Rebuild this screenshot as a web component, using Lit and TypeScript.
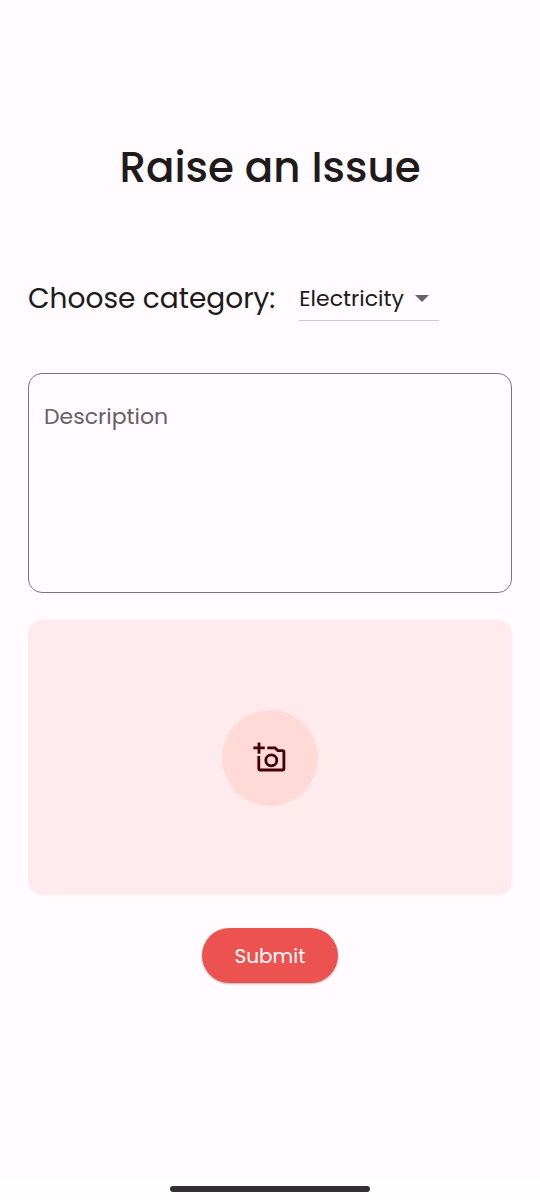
import { LitElement, html, css } from "lit";
import { customElement, state } from "lit/decorators.js";

const CATEGORIES = ["Electricity", "Water", "Roads", "Sanitation", "Other"];

@customElement("app-root")
export class AppRoot extends LitElement {
  static styles = css`
    :host {
      display: flex;
      flex-direction: column;
      min-height: 100vh;
      background: #fffbff;
      color: #201a1a;
      font-family: Poppins, Inter, "Open Sans", sans-serif;
    }
    * {
      box-sizing: border-box;
    }
    .content {
      flex: 1;
      display: flex;
      flex-direction: column;
      padding: 136px 28px 32px;
    }
    .title {
      margin: 0;
      text-align: center;
      font-size: 42px;
      line-height: 64px;
      font-weight: 500;
    }
    .category {
      display: flex;
      align-items: center;
      gap: 24px;
      margin-top: 76px;
      height: 45px;
    }
    .category-label {
      font-size: 28px;
      line-height: 44px;
    }
    .dropdown {
      display: grid;
      align-items: center;
      width: 140px;
    }
    .select {
      grid-area: 1 / 1;
      width: 100%;
      height: 45px;
      padding: 0;
      appearance: none;
      border: 0;
      border-bottom: 1px solid #cfcacd;
      background: transparent;
      color: inherit;
      font: inherit;
      font-size: 22px;
    }
    .arrow {
      grid-area: 1 / 1;
      justify-self: end;
      margin-right: 10px;
      pointer-events: none;
    }
    .description {
      display: block;
      width: 100%;
      height: 220px;
      margin-top: 52px;
      padding: 27px 15px;
      resize: none;
      border: 1px solid #857373;
      border-radius: 14px;
      background: transparent;
      color: inherit;
      font: inherit;
      font-size: 22px;
      line-height: 32px;
    }
    .description::placeholder {
      color: #686163;
      opacity: 1;
    }
    .upload {
      display: flex;
      align-items: center;
      justify-content: center;
      height: 275px;
      margin-top: 27px;
      border-radius: 14px;
      background: #ffebee;
    }
    .photo {
      display: flex;
      align-items: center;
      justify-content: center;
      width: 96px;
      height: 96px;
      padding: 0;
      border: 0;
      border-radius: 50%;
      background: #ffdad7;
      color: #410005;
    }
    .submit {
      align-self: center;
      height: 55px;
      margin-top: 33px;
      padding: 0 33px;
      border: 0;
      border-radius: 28px;
      background: #ec5250;
      box-shadow: 0 1px 2px rgba(0, 0, 0, 0.3);
      color: #fff;
      font: inherit;
      font-size: 20px;
    }
    .nav {
      display: flex;
      justify-content: center;
      padding: 6px 0 8px;
      background: #fffefe;
    }
    .handle {
      width: 37%;
      height: 6px;
      border-radius: 3px;
      background: #323032;
    }
  `;

  @state() private category = CATEGORIES[0];

  private onCategory(e: Event) {
    this.category = (e.target as HTMLSelectElement).value;
  }

  render() {
    return html`
      <main class="content">
        <h1 class="title">Raise an Issue</h1>
        <div class="category">
          <label class="category-label" for="category">Choose category:</label>
          <div class="dropdown">
            <select class="select" id="category" @change=${this.onCategory}>
              ${CATEGORIES.map(
                (c) => html`<option ?selected=${c === this.category}>${c}</option>`
              )}
            </select>
            <svg class="arrow" width="14" height="7" viewBox="0 0 14 7" aria-hidden="true">
              <path d="M0 0h14L7 7z" fill="#686163" />
            </svg>
          </div>
        </div>
        <textarea class="description" placeholder="Description" aria-label="Description"></textarea>
        <section class="upload">
          <button class="photo" type="button" aria-label="Add a photo">
            <svg width="36" height="36" viewBox="0 0 36 36" fill="none" stroke="currentColor" stroke-width="2.8" aria-hidden="true">
              <path d="M7 2.4v11.4M1.4 7.9h11.4" />
              <path d="M15.3 7.9h7.8l2.6 2.8h5a1.2 1.2 0 0 1 1.2 1.2v16.9a1.2 1.2 0 0 1-1.2 1.2H8a1.2 1.2 0 0 1-1.2-1.2V16" />
              <circle cx="19.3" cy="20.3" r="5.5" />
            </svg>
          </button>
        </section>
        <button class="submit" type="button">Submit</button>
      </main>
      <footer class="nav"><div class="handle"></div></footer>
    `;
  }
}
